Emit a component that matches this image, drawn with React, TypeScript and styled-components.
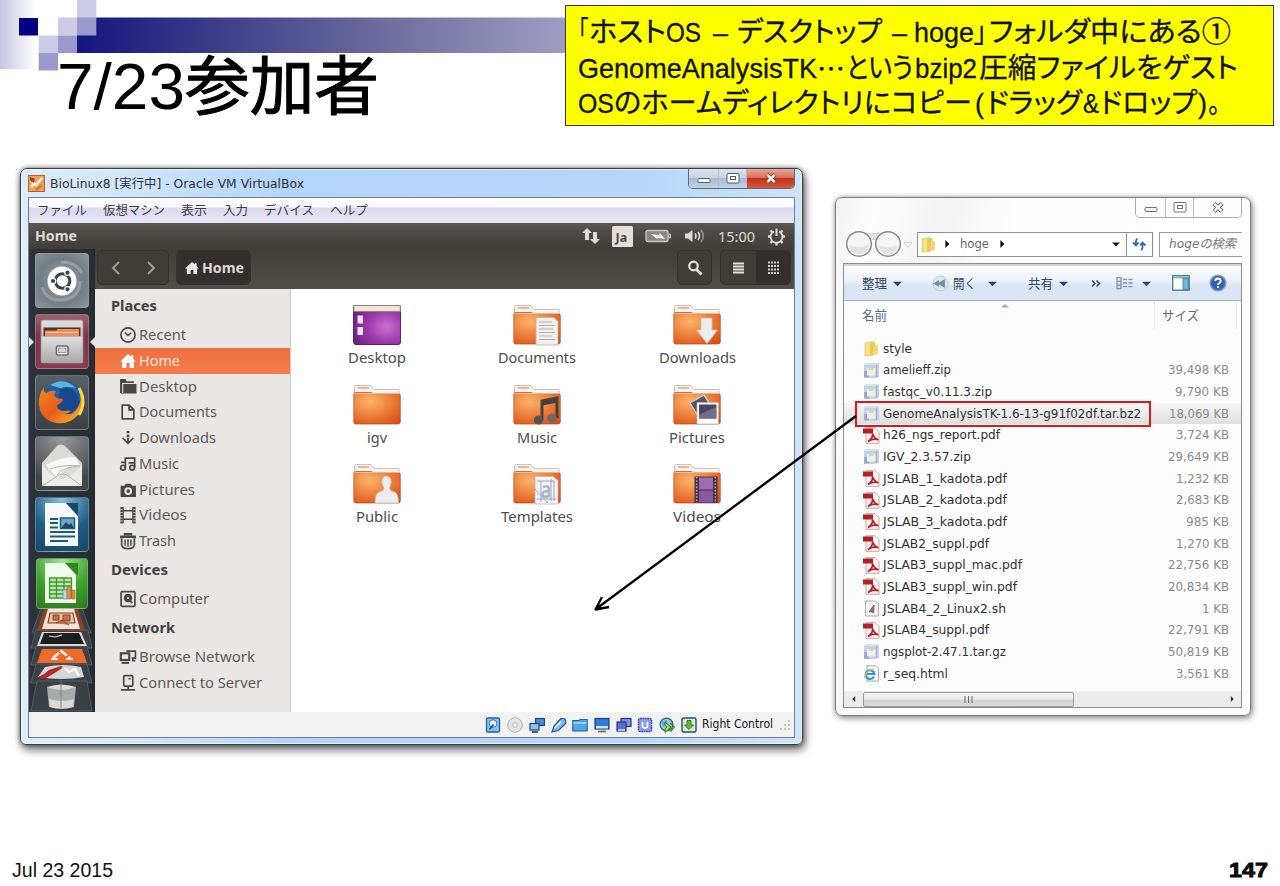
import React, { useLayoutEffect, useRef, useState } from "react";
import styled, { createGlobalStyle, css } from "styled-components";

const CJK = `"Noto Sans CJK JP", sans-serif`;
const UBUNTU = `"Noto Sans", "Open Sans", sans-serif`;
const WIN = `"DejaVu Sans", ${CJK}`;

const Global = createGlobalStyle`
  * { box-sizing: border-box; }
  body { margin: 0; background: #fff; overflow: hidden; }
`;

/* ---------- text set to a fixed measure ---------- */
const FitBox = styled.span<{ $w: number; $cjk?: boolean; $stroke?: number }>`
  display: inline-block;
  flex: none;
  width: ${(p) => p.$w}px;
  white-space: pre;
  text-align: left;
  ${(p) => p.$cjk && css`font-family: ${CJK};`}
  ${(p) => p.$stroke && css`-webkit-text-stroke: ${p.$stroke}px currentColor;`}
`;
const FitInner = styled.span`
  display: inline-block;
  transform-origin: 0 50%;
`;
function Fit({ w, cjk, stroke, children }: { w: number; cjk?: boolean; stroke?: number; children: string }) {
  const ref = useRef<HTMLSpanElement>(null);
  const [scale, setScale] = useState(1);
  useLayoutEffect(() => {
    if (ref.current && ref.current.offsetWidth) {
      const style = getComputedStyle(ref.current);
      setScale(w / parseFloat(style.width));
    }
  }, [w, children]);
  return (
    <FitBox $w={w} $cjk={cjk} $stroke={stroke}>
      <FitInner ref={ref} style={{ transform: `scaleX(${scale})` }}>
        {children}
      </FitInner>
    </FitBox>
  );
}

/* ---------- slide ---------- */
const Slide = styled.main`
  position: relative;
  display: flex;
  flex-direction: column;
  width: 1280px;
  height: 886px;
  background: #fff;
  overflow: hidden;
`;
const Header = styled.header`
  position: relative;
  display: flex;
  justify-content: space-between;
  align-items: flex-start;
  height: 168px;
  padding: 0 6px 0 57px;
`;
const Decor = styled.svg`
  position: absolute;
  left: 0;
  top: 0;
`;
const Title = styled.h1`
  position: relative;
  display: flex;
  margin: 50px 0 0;
  font: 400 64px/74px "Liberation Sans", ${CJK};
  color: #000;
`;
const Callout = styled.div`
  position: relative;
  width: 709px;
  height: 121px;
  margin-top: 5px;
  padding: 9px 0 0 12px;
  border: 1.5px solid #3a3a10;
  background: #ffff00;
  font: 400 28px/35.5px "Liberation Sans", ${CJK};
  font-feature-settings: "palt";
  -webkit-text-stroke: 0.3px #111;
  color: #111;
`;
const CalloutLine = styled.div`
  display: flex;
  height: 35.5px;
`;
const Gap = styled.span<{ $w: number }>`
  flex: none;
  width: ${(p) => p.$w}px;
`;
const Stage = styled.section`
  display: flex;
  align-items: flex-start;
  padding-left: 20px;
`;
const Footer = styled.footer`
  display: flex;
  justify-content: space-between;
  margin-top: auto;
  padding: 0 12px 4px;
  font: 400 19.5px/24px "Liberation Sans", sans-serif;
  color: #111;
`;
const PageNo = styled.b`
  font-weight: 700;
  font-size: 19.5px;
  -webkit-text-stroke: 0.8px #000;
`;
const Arrow = styled.svg`
  position: absolute;
  left: 585px;
  top: 405px;
`;

/* ---------- VirtualBox window ---------- */
const VmWindow = styled.article`
  display: flex;
  flex-direction: column;
  width: 783px;
  height: 577px;
  padding: 0 7px 6px;
  border: 1.5px solid #33404d;
  border-radius: 7px 7px 6px 6px;
  background: linear-gradient(90deg, #deecf9 0, #d3e7fb 90px, #b4d5fa 260px, #b6d7fa 620px, #cfe4f8 100%);
  box-shadow: 0 0 5px rgba(0, 0, 0, 0.55), 2px 5px 10px rgba(0, 0, 0, 0.55), inset 0 0 0 1px rgba(255, 255, 255, 0.65);
`;
const VmTitle = styled.div`
  display: flex;
  justify-content: space-between;
  height: 28px;
  flex: none;
  font: 400 12.5px/27px ${WIN};
  color: #2b3038;
`;
const VmName = styled.div`
  display: flex;
  align-items: center;
  gap: 5px;
`;
const Captions = styled.div<{ $pale?: boolean }>`
  display: flex;
  height: 20px;
  border: 1px solid ${(p) => (p.$pale ? "#a9a9a9" : "#5f6b7d")};
  border-top: 0;
  border-radius: 0 0 5px 5px;
  overflow: hidden;
`;
const Caption = styled.span<{ $w: number; $kind: "blue" | "red" | "pale" }>`
  display: flex;
  align-items: center;
  justify-content: center;
  width: ${(p) => p.$w}px;
  & + & {
    border-left: 1px solid ${(p) => (p.$kind === "pale" ? "#bdbdbd" : "#6a7687")};
  }
  background: ${(p) =>
    p.$kind === "red"
      ? "linear-gradient(#e9a898 0, #d9705a 45%, #bf3320 50%, #d8573c 100%)"
      : p.$kind === "blue"
        ? "linear-gradient(#dbe5f1 0, #c5d3e4 45%, #a9bcd3 50%, #bed2e8 100%)"
        : "#fdfdfd"};
`;
const Client = styled.div`
  display: flex;
  flex-direction: column;
  flex: 1;
  border: 1px solid #6d7f92;
  background: #f2f2f3;
  min-height: 0;
`;
const MenuBar = styled.nav`
  display: flex;
  flex: none;
  gap: 16px;
  height: 25px;
  padding-left: 8px;
  background: linear-gradient(#fff 0, #f5f6fb 35%, #d9dbee 42%, #e6e5f5 100%);
  font: 400 12.5px/23px ${CJK};
  color: #3c3c44;
`;
const Panel = styled.div`
  display: flex;
  align-items: center;
  flex: none;
  height: 26px;
  padding: 0 8px 0 6px;
  background: linear-gradient(#5b5753 0, #4c4944 45%, #413e3a 100%);
  font: 400 14.5px/26px ${UBUNTU};
  color: #dfdbd2;
`;
const PanelTitle = styled.b`
  margin-right: auto;
  font-weight: 700;
  font-size: 14px;
`;
const Indicators = styled.div`
  display: flex;
  align-items: center;
  gap: 12px;
`;
const Guest = styled.div`
  display: flex;
  flex: 1;
  min-height: 0;
`;
const Launcher = styled.aside`
  display: flex;
  flex-direction: column;
  flex: none;
  align-items: center;
  gap: 6px;
  width: 66px;
  padding-top: 4px;
  background: linear-gradient(90deg, #2c3339, #262d33);
  border-right: 1px solid #20262b;
`;
const Tile = styled.div<{ $bg: string; $short?: boolean }>`
  position: relative;
  display: flex;
  align-items: center;
  justify-content: center;
  flex: none;
  width: ${(p) => (p.$short ? 52 : 54)}px;
  height: ${(p) => (p.$short ? 51 : 55)}px;
  border: 1px solid rgba(160, 170, 178, 0.45);
  border-radius: 4px;
  background: ${(p) => p.$bg};
`;
const Pip = styled.span<{ $side: "left" | "right" }>`
  position: absolute;
  top: 22px;
  ${(p) => (p.$side === "left" ? css`left: -7px; border-left: 5px solid #e4e4e4;` : css`right: -7px; border-right: 5px solid #e4e4e4;`)}
  border-top: 5px solid transparent;
  border-bottom: 5px solid transparent;
`;
const Folded = styled.svg`
  display: block;
  flex: none;
  margin-top: -7px;
`;
const Files = styled.div`
  display: flex;
  flex-direction: column;
  flex: 1;
`;
const Toolbar = styled.div`
  display: flex;
  align-items: center;
  flex: none;
  height: 40px;
  padding: 0 1px 3px 2px;
  background: linear-gradient(#413e3a, #524f49);
  color: #dfdbd2;
`;
const ToolGroup = styled.div`
  display: flex;
  height: 35px;
  border: 1px solid #35322e;
  border-radius: 5px;
  background: #403d39;
  overflow: hidden;
`;
const ToolButton = styled.span<{ $w: number; $on?: boolean }>`
  display: flex;
  align-items: center;
  justify-content: center;
  gap: 2px;
  width: ${(p) => p.$w}px;
  background: ${(p) => (p.$on ? "#322f2c" : "transparent")};
  font: 700 14.5px/33px ${UBUNTU};
`;
const Browser = styled.div`
  display: flex;
  flex: 1;
  min-height: 0;
`;
const Sidebar = styled.aside`
  flex: none;
  width: 196px;
  padding-top: 1px;
  background: #e9e6e4;
  border-right: 1px solid #cdc9c6;
  color: #5e5a56;
`;
const SideHeading = styled.div`
  height: 32px;
  padding-left: 16px;
  font: 700 14px/32px ${UBUNTU};
  color: #45413e;
`;
const SideRow = styled.div<{ $on?: boolean }>`
  display: flex;
  align-items: center;
  gap: 2px;
  height: 25.8px;
  padding-left: 24px;
  font: 400 14px/26px ${UBUNTU};
  color: ${(p) => (p.$on ? "#fde6dc" : "#5e5a56")};
  background: ${(p) => (p.$on ? "linear-gradient(#ee6f3d, #f47c4c)" : "none")};
`;
const IconGrid = styled.div`
  display: grid;
  grid-template-columns: repeat(3, 160px);
  grid-auto-rows: 79.6px;
  flex: 1;
  padding: 15px 0 0 6px;
  background: #fff;
`;
const IconCell = styled.div`
  display: flex;
  flex-direction: column;
  align-items: center;
  font: 400 14px/20px ${UBUNTU};
  color: #4c4c4c;
  svg { display: block; margin-bottom: 2px; }
`;
const StatusBar = styled.div`
  display: flex;
  align-items: center;
  justify-content: flex-end;
  flex: none;
  gap: 5.7px;
  height: 25px;
  padding-right: 3px;
  background: #f1f1f1;
  font: 400 12px/25px "DejaVu Sans", sans-serif;
  color: #111;
`;

/* ---------- Explorer window ---------- */
const Explorer = styled.article`
  display: flex;
  flex-direction: column;
  width: 416px;
  height: 519px;
  margin: 29px 0 0 32px;
  padding: 0 8px 7px 7px;
  border: 1.5px solid #7d7d7d;
  border-radius: 7px;
  background: linear-gradient(105deg, #f1f1f1 0, #fdfdfd 40px, #f3f3f3 110px, #fefefe 180px, #fff 100%);
  box-shadow: 0 0 5px rgba(0, 0, 0, 0.35), 2px 3px 6px rgba(0, 0, 0, 0.3);
`;
const ExplorerTop = styled.div`
  display: flex;
  justify-content: flex-end;
  flex: none;
  height: 33px;
`;
const NavRow = styled.div`
  display: flex;
  align-items: center;
  flex: none;
  height: 26px;
  margin-bottom: 6px;
  color: #666;
  font: 400 12.5px/22px ${WIN};
`;
const Address = styled.div`
  display: flex;
  align-items: center;
  width: 236px;
  height: 25px;
  margin-left: 3px;
  border: 1px solid #8f8f8f;
  background: #fff;
`;
const Refresh = styled.span`
  display: flex;
  align-items: center;
  justify-content: center;
  width: 26px;
  height: 23px;
  border-left: 1px solid #8f8f8f;
`;
const Search = styled.div`
  flex: 1;
  height: 25px;
  margin-left: 6px;
  padding-left: 9px;
  border: 1px solid #9a9a9a;
  border-right: 0;
  background: #fff;
  font-style: italic;
  color: #777;
`;
const Body = styled.div`
  display: flex;
  flex-direction: column;
  flex: 1;
  min-height: 0;
  border: 1px solid #8b8b8b;
  background: #fdfdfd;
`;
const Commands = styled.div`
  display: flex;
  align-items: center;
  flex: none;
  height: 37px;
  padding-left: 18px;
  border-top: 2px solid #d3d7e0;
  border-bottom: 1.5px solid #a9b3c4;
  background: linear-gradient(#fbfdff 0, #edf3fb 40%, #d9e4f4 60%, #dbe6f5 100%);
  font: 400 13px/32px ${CJK};
  color: #36475f;
`;
const Columns = styled.div`
  position: relative;
  display: flex;
  flex: none;
  height: 36.5px;
  padding-left: 18px;
  font: 400 13px/28px ${CJK};
  color: #5f6a78;
`;
const SizeHead = styled.span`
  width: 83px;
  height: 28px;
  margin-left: auto;
  margin-right: 4px;
  padding-left: 7px;
  border-left: 1px solid #e6e6e6;
  border-right: 1px solid #ececec;
`;
const SortMark = styled.svg`
  position: absolute;
  left: 156px;
  top: 2px;
`;
const FileRow = styled.div<{ $on?: boolean }>`
  position: relative;
  display: flex;
  align-items: center;
  flex: none;
  gap: 3px;
  height: 21.7px;
  padding: 0 12px 0 19px;
  font: 400 12.5px/21.7px ${WIN};
  color: #303030;
  background: ${(p) => (p.$on ? "linear-gradient(#f6f6f6, #dedede)" : "none")};
  svg { flex: none; }
`;
const FileSize = styled.span`
  display: flex;
  margin-left: auto;
  color: #8a8a8a;
`;
const Highlight = styled.span`
  position: absolute;
  left: 11px;
  top: -2px;
  width: 296px;
  height: 26px;
  border: 2px solid #e8141c;
`;
const ScrollBar = styled.div`
  display: flex;
  align-items: center;
  justify-content: space-between;
  height: 16px;
  margin-top: auto;
  padding: 0 6px 0 7px;
  background: #ececec;
`;
const Track = styled.div`
  flex: 1;
  display: flex;
  margin: 0 6px;
`;
const Thumb = styled.div`
  display: flex;
  align-items: center;
  justify-content: center;
  width: 211px;
  height: 15px;
  border: 1px solid #9b9b9b;
  border-radius: 2px;
  background: linear-gradient(#f6f6f6 0, #e8e8e8 48%, #d2d2d2 55%, #dcdcdc 100%);
`;

/* ---------- small drawings ---------- */
const CapIcon = ({ kind, pale }: { kind: "min" | "max" | "close"; pale?: boolean }) => {
  const s = pale ? "#707070" : "#4f5a6a";
  return (
    <svg width="16" height="13" viewBox="0 0 16 13">
      {kind === "min" && <rect x="2" y="6.5" width="12" height="4" rx="1" fill="#fff" stroke={s} />}
      {kind === "max" && (
        <g fill="#fff" stroke={s}>
          <rect x="2" y="1.5" width="12" height="9.5" rx="1" />
          <rect x="5.500" y="4.500" width="5" height="3" />
        </g>
      )}
      {kind === "close" && (
        <g>
          <path d="M4 2.500l8 8M12 2.500l-8 8" stroke={pale ? "#666" : "#8a3b33"} strokeWidth="4.400" />
          <path d="M4.300 2.800l7.400 7.400M11.700 2.800l-7.400 7.400" stroke="#fff" strokeWidth="2.400" />
        </g>
      )}
    </svg>
  );
};

const House = ({ color = "currentColor", s = 18 }: { color?: string; s?: number }) => (
  <svg width={s} height={s} viewBox="0 0 17 17" fill={color}>
    <path d="M8.500 2L1 9h2v6h4v-4.500h3V15h4V9h2l-2.600-2.600V3h-2v1.500z" />
  </svg>
);

const sideIcons: Record<string, React.ReactNode> = {
  Recent: <><circle cx="8.500" cy="8.500" r="6.700" /><path d="M5.500 6l3 3 3-2.600" strokeWidth="1.400" /></>,
  Desktop: <><path d="M1 15V2h5.200l1 2H14v1.600H3V15z" fill="currentColor" stroke="none" /><path d="M4 6.600h12.500V15.500H1.500V15H4z" fill="currentColor" stroke="none" /></>,
  Documents: <path d="M3 2h6.500L14 6.300V15H3zM9.500 2v4.500H14" />,
  Downloads: <><path d="M3.500 8.500l5 5 5-5M8.500 13V8" /><path d="M8.500 2v2M8.500 5.500v2" strokeWidth="2.600" /></>,
  Music: <><circle cx="3.800" cy="12" r="2.200" /><circle cx="12.400" cy="12" r="2.200" /><path d="M6 12V7H2M6 8V3h8.800v9M9 7.500h5" /></>,
  Pictures: <path fillRule="evenodd" d="M1.500 4.500h3.500l1.500-2h4.500l1.500 2h3.500V15H1.500zM8.700 6a3.600 3.600 0 100 7.200 3.600 3.600 0 000-7.200zm0 1.900a1.700 1.700 0 110 3.400 1.700 1.700 0 010-3.400z" fill="currentColor" stroke="none" />,
  Videos: <><path d="M2.500 1v15.500M14.500 1v15.500" strokeWidth="2.400" strokeDasharray="2 .7" /><path d="M4 1v15M13 1v15" strokeWidth="1" /><path d="M4 4.500h9M4 12.500h9" strokeWidth="1.600" /></>,
  Trash: <><path d="M1 4.500h15M4.500 2h8" strokeWidth="2.200" /><path d="M2.500 6v6.500Q3 15.800 8.500 15.800T14.500 12.500V6" /><path d="M5.700 7v6M8.500 7v7M11.300 7v6" strokeWidth="1.400" /></>,
  Computer: <><rect x="2" y="1.500" width="13" height="14" rx="1" /><circle cx="8.500" cy="7.500" r="3.200" fill="currentColor" /><circle cx="8.500" cy="7.500" r="1" fill="#e9e6e4" stroke="none" /><path d="M9.500 8.500l3 4" /></>,
  "Browse Network": <><path d="M7 3h8.500v6.500H12M13 9v3h2.500" /><rect x="1.700" y="5" width="8" height="6.300" fill="#e9e6e4" strokeWidth="2" /><path d="M2.500 14h7" strokeWidth="2" /></>,
  "Connect to Server": <><rect x="4.500" y="1.500" width="8.500" height="10" rx="1" /><path d="M9 4.500h2M8.700 11.500V15M2 15h13" /></>,
};
const SideIcon = ({ name }: { name: string }) =>
  name === "Home" ? (
    <House color="#fff" />
  ) : (
    <svg width="18" height="18" viewBox="0 0 17 17" fill="none" stroke="currentColor" strokeWidth="1.600" color="#4a4642">
      {sideIcons[name]}
    </svg>
  );

const folderArt: Record<string, React.ReactNode> = {
  Documents: <><path d="M23 13.500h18l4 4V41H23z" fill="#f1efec" stroke="#b9b4ae" strokeWidth=".8" /><path d="M26 18h13M26 21.500h16M26 25h14M26 28.500h16M26 32h13M26 35.500h16" stroke="#b5b2ae" strokeWidth="1.200" /></>,
  Downloads: <path d="M28 14h11v12h5.500L34 39.500 23.500 26H28z" fill="#eeecea" stroke="#c3beba" strokeWidth=".8" />,
  Music: <><path d="M29 36V17l15-3v20" fill="none" stroke="#44423e" strokeWidth="3" /><path d="M29 19l15-3" stroke="#44423e" strokeWidth="5" /><circle cx="25.500" cy="36" r="4.600" fill="#56534f" /><circle cx="39" cy="34" r="4.600" fill="#6d6862" /></>,
  Pictures: <><path d="M17 19l14-8 9 14-13 10z" fill="#56536a" stroke="#d6d1cd" strokeWidth="1.400" /><path d="M24 18.500h21.500V40H24z" fill="#fff" stroke="#bbb6b2" strokeWidth=".7" /><rect x="26" y="20.500" width="17.500" height="14" fill="#4b4560" /><path d="M26 31l17-8v11.500H26z" fill="#746c8c" /></>,
  Public: <path d="M33.500 13a4.500 5.500 0 014 8.500l-1 4q0 2 5 3.500 4 1.500 4 11H22q0-9.500 4-11 5-1.500 5-3.500l-1.500-4a4.500 5.500 0 014-8.500z" fill="#ececea" stroke="#c0bcb8" strokeWidth=".8" />,
  Templates: <><path d="M22 13.500h18l5 4V41H22z" fill="#f3f3f4" stroke="#b9b9bf" strokeWidth=".8" /><path d="M24 18h17v20M28 18v21M38 16v22M24 36h19M22 26l13 14" fill="none" stroke="#8e9dbb" strokeWidth=".9" /><path d="M30 24q6-2 6 2v7q-6 2-6.500-1.500T36 28" fill="none" stroke="#a2b2d4" strokeWidth="2.400" /></>,
  Videos: <><rect x="21.500" y="13.500" width="23" height="26.500" fill="#3e3540" /><rect x="26" y="14.500" width="14" height="12" fill="#a06bb3" /><rect x="26" y="27.500" width="14" height="12" fill="#8c55a2" /><path d="M23.700 14v26M42.300 14v26" stroke="#b8a5bd" strokeWidth="1.600" strokeDasharray="1.600 1.600" /></>,
};
const Folder = ({ name }: { name: string }) =>
  name === "Desktop" ? (
    <svg width="48" height="42" viewBox="0 0 48 42">
      <rect x=".5" y="1.500" width="47" height="39" rx="2.500" fill="url(#desk)" stroke="#5a2468" />
      <rect x=".8" y="1.500" width="46.500" height="6" fill="#ece6d2" stroke="#8b8272" strokeWidth=".9" />
      <rect x="4.500" y="11.500" width="5.500" height="8" fill="#f2def6" />
      <rect x="4.500" y="23" width="5.500" height="8" fill="#f2def6" />
    </svg>
  ) : (
    <svg width="48" height="42" viewBox="0 0 48 42">
      <path d="M1.500 12V3q0-1.500 1.500-1.500h15l3 4h25V14H1.500z" fill="#faf4f0" stroke="#d0b8aa" strokeWidth=".9" />
      <path d="M5 4h11" stroke="#e0a88c" strokeWidth="1.600" />
      <path d="M.8 10.500q0-2 2-2h15l3 1h24.500q2 0 2 2V38q0 2-2 2H2.800q-2 0-2-2z" fill="url(#fold)" stroke="#b9481c" strokeWidth=".7" />
      <path d="M1.500 9.500h45" stroke="#fbd2b0" strokeWidth="1" opacity=".7" />
      {folderArt[name]}
    </svg>
  );

const FileIcon = ({ kind }: { kind: string }) => (
  <svg width="17" height="17" viewBox="0 0 17 17">
    {kind === "dir" && (
      <g>
        <path d="M2 3l7-1.500V15l-7 1z" fill="#f5e08a" stroke="#d9bd55" strokeWidth=".6" />
        <path d="M7 2.500l3-1 2.500 1V14L9 16l-2-1z" fill="#e8ca5c" />
        <path d="M11 6l4-1.500V14l-5 1z" fill="#efd77a" />
      </g>
    )}
    {kind === "zip" && (
      <g>
        <path d="M1 2.500h11l4-1V15l-4 1H1z" fill="#c3d1e6" />
        <path d="M1 2.500L3 1h13l-3.500 1.500z" fill="#d5e0ef" />
        <rect x="1" y="9" width="5" height="6.500" fill="#93abd3" />
        <rect x="4" y="6" width="8.500" height="7.500" rx="1" fill="#f3efe4" />
        <path d="M6 6h4.500v2H6z" fill="#e0d3a6" />
        <path d="M13.500 3v12" stroke="#9db2d3" strokeWidth="1.200" />
      </g>
    )}
    {kind === "pdf" && (
      <g>
        <path d="M3 .7h9l4 4V16.300H3z" fill="#fbf3f2" stroke="#c79a98" strokeWidth=".9" />
        <path d="M0 1.500h10v5H0z" fill="#b11f29" />
        <path d="M5 14.500q5-3 4.500-8 1.500 5 6 6.300Q10 11 5 14.500z" fill="none" stroke="#b5212b" strokeWidth="1.700" />
      </g>
    )}
    {kind === "sh" && (
      <g>
        <path d="M2.500 1h10l3 2.500V16h-13z" fill="#f4f2f1" stroke="#a8a4a2" strokeWidth=".9" />
        <path d="M6 12l5-7-.5 8" fill="#8d7075" stroke="#6b5f63" strokeWidth="1" />
      </g>
    )}
    {kind === "html" && (
      <g>
        <path d="M4 .8h8.500l3 3V16H4z" fill="#fbfbfb" stroke="#a0a0a0" strokeWidth=".9" />
        <path d="M11 11.500A4.400 4.400 0 1111.400 9H4" fill="none" stroke="#2f97d3" strokeWidth="2.200" />
        <path d="M1.500 13.500Q1 8 10.500 3" fill="none" stroke="#e4c845" strokeWidth="1.300" />
      </g>
    )}
  </svg>
);

const statusArt: React.ReactNode[] = [
  <><rect x="1.500" y="1" width="13" height="14" rx="1.500" fill="#8cc4ee" stroke="#205f9e" strokeWidth="1.300" /><circle cx="8" cy="6.500" r="3.800" fill="#e9f6ff" stroke="#2e78b8" /><path d="M4.500 12.500l4-5" stroke="#184f8c" strokeWidth="1.700" /></>,
  <><circle cx="8" cy="8" r="7.300" fill="#e3e3e3" stroke="#b3b3b3" /><circle cx="8" cy="8" r="2.200" fill="#fff" stroke="#b5b5b5" /></>,
  <><rect x="6.500" y="1.500" width="9" height="7" fill="#4f8bda" stroke="#1f4374" strokeWidth="1.200" /><rect x="1" y="6.500" width="9" height="6.500" fill="#8fc0f2" stroke="#1f4374" strokeWidth="1.200" /><path d="M3 15h6" stroke="#1f4374" strokeWidth="1.600" /></>,
  <><path d="M1 15l2-6 7-7.500 4 .5 1 4-7.500 7.500z" fill="#7db9ea" stroke="#265a92" strokeWidth="1.200" /><path d="M4 11l6-6.500" stroke="#dff0fc" strokeWidth="1.600" /></>,
  <><path d="M.8 14V3.500h6l1.500-1h6.900V14z" fill="#4fa8e8" stroke="#225f9d" strokeWidth="1.100" /><path d="M1.500 6h13" stroke="#b9e0fa" strokeWidth="1.400" /></>,
  <><rect x="1" y="1.500" width="14" height="10.500" fill="#2b7de0" stroke="#2b3f5c" strokeWidth="1.200" /><rect x="2" y="9" width="12" height="2.500" fill="#cfe3f6" /><path d="M4 14.500h8" stroke="#666" strokeWidth="1.600" /></>,
  <><rect x="5" y="1.500" width="10" height="8" fill="#7892e0" stroke="#25367e" strokeWidth="1.200" /><rect x="1" y="5" width="9" height="9" fill="#5970cd" stroke="#25367e" strokeWidth="1.200" /><path d="M2 13h7" stroke="#cdd8fa" strokeWidth="1.600" /></>,
  <><rect x="1.500" y="1.500" width="13" height="13" rx="1.500" fill="#8fa0e6" stroke="#39459c" strokeWidth="1.400" strokeDasharray="1.800 .6" /><path d="M5.500 5v4q0 2 2.500 2t2.500-2V5" fill="none" stroke="#fff" strokeWidth="1.500" /></>,
  <><circle cx="7.500" cy="7.500" r="6.400" fill="#9ac7e6" stroke="#2b5d8d" strokeWidth="1.200" /><path d="M3 5l4-2 2 2-5 5z" fill="#5ca4d6" /><path d="M6 5l6 5-6 5.500v-3.500L8 10 6 8.500z" fill="#a5dd4c" stroke="#3c7c17" /><path d="M11 6l4.500 4-4 4.500" fill="none" stroke="#3c7c17" strokeWidth="1.200" /></>,
  <><rect x="1" y="1" width="14" height="14" rx="1.500" fill="#d9e9e0" stroke="#2d4d73" strokeWidth="1.400" /><path d="M6 3.500h4V8h2.500L8 12.500 3.500 8H6z" fill="#67bd24" stroke="#2f7312" strokeWidth=".9" /></>,
];

const Defs = () => (
  <svg width="0" height="0" display="block" aria-hidden="true">
    <defs>
      <radialGradient id="fold" cx=".35" cy=".28" r=".9">
        <stop offset="0" stopColor="#f9b56c" />
        <stop offset=".45" stopColor="#ee853f" />
        <stop offset="1" stopColor="#d94c15" />
      </radialGradient>
      <radialGradient id="desk" cx=".7" cy=".55" r=".75">
        <stop offset="0" stopColor="#c873cf" />
        <stop offset=".5" stopColor="#a13cae" />
        <stop offset="1" stopColor="#6c2181" />
      </radialGradient>
      <linearGradient id="fox" x1="0" y1="0" x2="1" y2="1">
        <stop offset="0" stopColor="#f08a1d" />
        <stop offset=".5" stopColor="#e8591c" />
        <stop offset="1" stopColor="#f5c032" />
      </linearGradient>
      <linearGradient id="steel" x1="0" y1="0" x2="0" y2="1">
        <stop offset="0" stopColor="#dedede" />
        <stop offset="1" stopColor="#a9a9a9" />
      </linearGradient>
      <linearGradient id="bar" x1="77" x2="566" y1="0" y2="0" gradientUnits="userSpaceOnUse">
        <stop offset="0" stopColor="#15157f" />
        <stop offset=".3" stopColor="#3f3f8a" />
        <stop offset=".68" stopColor="#7474a2" />
        <stop offset="1" stopColor="#9f9dc3" />
      </linearGradient>
      <linearGradient id="fade" x1="0" x2="1" y1="0" y2="0">
        <stop offset="0" stopColor="#c5c5e3" />
        <stop offset="1" stopColor="#fff" />
      </linearGradient>
    </defs>
  </svg>
);

const SlideDecor = () => (
  <Decor width="570" height="72" viewBox="0 0 570 72">
    <rect width="36" height="69" fill="url(#fade)" />
    <rect x="77" y="17.500" width="493" height="35.500" fill="url(#bar)" />
    <rect x="19" y="18" width="19" height="17.500" fill="#000080" />
    <g fill="#cbcbe6">
      <rect x="77" width="19.300" height="18" />
      <rect x="58" y="17.500" width="19" height="18" />
      <rect x="38.700" y="35.500" width="19.300" height="18" />
    </g>
    <g fill="#9999cc">
      <rect x="77" y="17.500" width="19.300" height="18" />
      <rect x="58" y="35.500" width="19" height="17.500" />
      <rect x="38.700" y="53" width="19.300" height="17.500" />
    </g>
  </Decor>
);

/* ---------- launcher drawings ---------- */
const UbuntuLogo = () => (
  <svg width="52" height="52" viewBox="0 0 52 52">
    <path d="M6 32q4 14 20 13 18-2 18-19M46 18Q40 7 25 7" fill="none" stroke="#b9c1c6" strokeWidth="3" opacity=".45" />
    <circle cx="26" cy="26" r="14.500" fill="#fff" />
    <circle cx="26.500" cy="26" r="7.300" fill="none" stroke="#3b4247" strokeWidth="3" />
    <g fill="#3b4247" stroke="#fff" strokeWidth="1.200">
      <circle cx="17" cy="26" r="2.700" />
      <circle cx="31.500" cy="17.700" r="2.700" />
      <circle cx="31.500" cy="34.300" r="2.700" />
    </g>
  </svg>
);
const Cabinet = () => (
  <svg width="48" height="50" viewBox="0 0 48 50">
    <rect x="3" y="3" width="42" height="43" rx="2" fill="url(#steel)" stroke="#8c8c8c" strokeWidth=".8" />
    <rect x="5.500" y="10.500" width="37" height="9" fill="#55302a" />
    <path d="M7 19v-5.500h11l1.500-1.500H41v7z" fill="#ec8f5c" />
    <path d="M8 15.500h32" stroke="#fbcba5" strokeWidth="1" />
    <rect x="3.500" y="19.500" width="41" height="26.500" rx="1" fill="url(#steel)" />
    <rect x="18.500" y="29" width="11.500" height="9" rx="1.500" fill="#fff" stroke="#6b6b6b" strokeWidth="1.600" />
    <rect x="20.500" y="31" width="7.500" height="4.500" fill="#d6d6d6" stroke="#777" strokeWidth=".7" />
  </svg>
);
const Firefox = () => (
  <svg width="52" height="52" viewBox="0 0 52 52">
    <circle cx="27" cy="24" r="20" fill="#1d5fa8" />
    <path d="M14 8q14-9 26 3-8-2-11 2-8-3-15-5z" fill="#58b4e4" />
    <path d="M24 12q10-6 17 6t-6 18q-10 4-14-4z" fill="#174a8a" />
    <path d="M42 12q9 14 0 26-9 10-22 8Q5 43 3 28 2 18 8 10q-1 5 2 6 5-3 10-2-4 5 1 7l6 1q-1 4-6 6 0 6 8 6 3-1 6 0-2 2-6 3 8 2 13-7 5-8 0-18z" fill="url(#fox)" />
    <path d="M43 11q8 14 0 27" fill="none" stroke="#f6da45" strokeWidth="3" />
  </svg>
);
const Mail = () => (
  <svg width="48" height="50" viewBox="0 0 48 50">
    <path d="M4 24L19 7q4-3 8 0l17 17v23H4z" fill="#dadad8" />
    <path d="M8 26q14-8 30-8l4 9q-18 1-22 13z" fill="#f8f8f6" />
    <path d="M4 25q8 14 20 15 13-3 20-15v22H4z" fill="#ebebe9" />
    <path d="M4 47l17-11q4-2 8 0l15 11M12 30q15-5 30-3-18 1-23 9" fill="none" stroke="#b4b4b1" strokeWidth="1" />
  </svg>
);
const Writer = () => (
  <svg width="42" height="46" viewBox="0 0 42 46">
    <path d="M4 1h21l12 13v30H4z" fill="#f5f9fb" />
    <path d="M25 1l12 13V1z" fill="#164a6c" />
    <path d="M9 17h8M9 21h8M9 25.500h8M9 30h25M9 34.500h25M9 39h18" stroke="#1f5879" strokeWidth="2" />
    <rect x="19.500" y="16" width="14" height="10.500" fill="#69a8c9" stroke="#1f5879" strokeWidth="1.500" />
    <path d="M20 26l5-6 3 3 2-2 3 5z" fill="#194a68" />
  </svg>
);
const Calc = () => (
  <svg width="42" height="46" viewBox="0 0 42 46">
    <path d="M4 2h20l11 12v28H4z" fill="#f2faee" />
    <path d="M24 2l13 13V2z" fill="#2e8a1f" />
    <path d="M8.500 17h22v20h-22zM8.500 21h22M8.500 25h22M8.500 29h22M8.500 33h22M15.500 17v20M23 17v20" fill="#bde5ac" stroke="#3a9a2b" strokeWidth="1.300" />
    <path d="M22 38v-9h4v9z" fill="#b9d7ee" stroke="#6f9bc4" strokeWidth=".9" />
    <path d="M26 38V26h3.500v12zM31 38v-9h3v9z" fill="#e68b3c" stroke="#b5713c" strokeWidth=".7" />
  </svg>
);
const Stack = () => (
  <Folded width="65" height="104" viewBox="0 0 65 104">
    <g fill="#3a4147" stroke="#5d656b" strokeWidth=".8">
      <path d="M12 0h41l9 25H3z" />
      <path d="M7 22h52l4 18H2z" />
      <path d="M7 38h51l5 19H2z" />
      <path d="M7 56h51l5 19H2z" />
      <path d="M8 73h50l5 30H2z" />
    </g>
    <path d="M15 1h34l7 22H8z" fill="#8a4524" />
    <path d="M19 1h26l6 20H13z" fill="#f3e3da" />
    <path d="M21 5h23l2 10H19z" fill="#edc0a0" stroke="#7c442b" strokeWidth="1.200" />
    <path d="M24 7h6v5h-6zM34 7h7v6h-7zM27 15l6-3 7 5" fill="#cc6a44" stroke="#7c442b" strokeWidth=".9" />
    <path d="M13 24h39l6 14H8z" fill="#d8d8d8" />
    <path d="M15 25h35l5 11H11z" fill="#1c1d1f" />
    <path d="M20 28l6 1 7-2" stroke="#ddd" strokeWidth="1.200" fill="none" />
    <path d="M13 41h40l5 14H8z" fill="#ee6a2b" />
    <path d="M24 50l8-7 9 7" fill="none" stroke="#fff0e6" strokeWidth="2.600" strokeDasharray="8 2" />
    <path d="M22 51h7M37 51h7" stroke="#fff0e6" strokeWidth="2" />
    <path d="M16 59q18-4 36 0l3 10q-23 4-46 0z" fill="#d6d6d6" />
    <path d="M9 69q6-2 11-7l12-4q3 0 0 3l-13 8q-6 3-10 0z" fill="#b5282d" />
    <path d="M36 60l4 4 6-3 4 7" stroke="#fff" strokeWidth="2" fill="none" />
    <path d="M18 79h29l-2 20q-12 4-25 0z" fill="#a9abab" />
    <path d="M18 79q14-5 29 0-14 6-29 0zM20 91q12 4 25 0l-1 8q-12 3-23 0z" fill="#d9dada" />
    <path d="M32 72v28" stroke="#777" strokeWidth=".8" />
  </Folded>
);

/* ---------- data ---------- */
const menus: [string, number][] = [["ファイル", 50], ["仮想マシン", 62], ["表示", 26], ["入力", 25], ["デバイス", 50], ["ヘルプ", 38]];
const places: [string, number][] = [["Recent", 47], ["Home", 41], ["Desktop", 58], ["Documents", 78], ["Downloads", 77], ["Music", 40], ["Pictures", 56], ["Videos", 48], ["Trash", 37]];
const folders: [string, number][] = [["Desktop", 58], ["Documents", 78], ["Downloads", 77], ["igv", 20], ["Music", 40], ["Pictures", 56], ["Public", 42], ["Templates", 72], ["Videos", 48]];
const files: [string, string, number, string, number][] = [
  ["dir", "style", 29, "", 0],
  ["zip", "amelieff.zip", 68, "39,498 KB", 61],
  ["zip", "fastqc_v0.11.3.zip", 109, "9,790 KB", 54],
  ["zip", "GenomeAnalysisTK-1.6-13-g91f02df.tar.bz2", 258, "18,069 KB", 60],
  ["pdf", "h26_ngs_report.pdf", 117, "3,724 KB", 53],
  ["zip", "IGV_2.3.57.zip", 88, "29,649 KB", 61],
  ["pdf", "JSLAB_1_kadota.pdf", 124, "1,232 KB", 53],
  ["pdf", "JSLAB_2_kadota.pdf", 124, "2,683 KB", 53],
  ["pdf", "JSLAB_3_kadota.pdf", 124, "985 KB", 43],
  ["pdf", "JSLAB2_suppl.pdf", 106, "1,270 KB", 53],
  ["pdf", "JSLAB3_suppl_mac.pdf", 139, "22,756 KB", 61],
  ["pdf", "JSLAB3_suppl_win.pdf", 134, "20,834 KB", 61],
  ["sh", "JSLAB4_2_Linux2.sh", 123, "1 KB", 27],
  ["pdf", "JSLAB4_suppl.pdf", 106, "22,791 KB", 61],
  ["zip", "ngsplot-2.47.1.tar.gz", 123, "50,819 KB", 61],
  ["html", "r_seq.html", 65, "3,561 KB", 53],
];

/* numbers are gaps, pairs are text runs with their measure */
const calloutLines: (number | [string, number])[][] = [
  [["「", 10], 1, ["ホスト", 77], ["OS", 35], 12, ["–", 15], 9, ["デスクトップ", 145], 10, ["–", 15], 7, ["hoge", 60], ["」", 13], 2, ["フォルダ中にある①", 242]],
  [["GenomeAnalysisTK", 239], ["…", 28], 1, ["という", 67], 2, ["bzip2", 62], 2, ["圧縮ファイルをゲスト", 259]],
  [["OS", 36], ["のホームディレクトリにコピー", 358], 3, ["(", 9], 2, ["ドラッグ", 96], 1, ["&", 16], 1, ["ドロップ", 97], 1, [")", 9], 1, ["。", 12]],
];

const Tri = ({ dir, w = 9, c = "#36475f" }: { dir: "down" | "right" | "left"; w?: number; c?: string }) => (
  <svg width={w} height={w} viewBox="0 0 10 10" fill={c}>
    <path d={dir === "down" ? "M0 3h10L5 8z" : dir === "right" ? "M3 0v10l5-5z" : "M7 0v10L2 5z"} />
  </svg>
);

const VirtualBox = () => (
  <VmWindow>
    <VmTitle>
      <VmName>
        <svg width="17" height="17" viewBox="0 0 17 17">
          <rect x=".5" y=".5" width="16" height="16" fill="#eda45a" stroke="#a2683a" />
          <path d="M2 5l6 5 6-7M3 12l4-4" stroke="#fff3df" strokeWidth="2.500" fill="none" />
          <path d="M2 2l5 2-1 4-4-2z" fill="#b5372c" />
          <path d="M8 15l6-5" stroke="#d9772b" strokeWidth="2.500" />
        </svg>
        <Fit w={254}>BioLinux8 [実行中] - Oracle VM VirtualBox</Fit>
      </VmName>
      <Captions>
        <Caption $w={29} $kind="blue"><CapIcon kind="min" /></Caption>
        <Caption $w={28} $kind="blue"><CapIcon kind="max" /></Caption>
        <Caption $w={48} $kind="red"><CapIcon kind="close" /></Caption>
      </Captions>
    </VmTitle>
    <Client>
      <MenuBar>{menus.map(([t, w]) => <Fit key={t} w={w}>{t}</Fit>)}</MenuBar>
      <Panel>
        <PanelTitle><Fit w={42}>Home</Fit></PanelTitle>
        <Indicators>
          <svg width="19" height="18" viewBox="0 0 19 18" fill="#dfdbd2">
            <path d="M6 1l5 5H8v7H4V6H1zM14 17l-5-5h3V5h4v7h3z" />
          </svg>
          <svg width="21" height="21" viewBox="0 0 21 21">
            <rect width="21" height="21" rx="1.500" fill="#e3dfd6" />
            <text x="3.500" y="15.500" fontSize="12.500" fontWeight="700" fill="#4a4742" fontFamily="Noto Sans, sans-serif">Ja</text>
          </svg>
          <svg width="27" height="14" viewBox="0 0 27 14">
            <rect x="1" y="1.500" width="22" height="11" rx="2" fill="#8a8781" stroke="#c9c5bc" strokeWidth="1.400" />
            <path d="M24 5v4h1.500V5z" stroke="#c9c5bc" fill="none" />
            <path d="M6 5l8 1 1-2 5 6-7-1-1 1z" fill="#f2efe8" />
          </svg>
          <svg width="22" height="16" viewBox="0 0 22 16" fill="none" stroke="#dfdbd2" strokeWidth="1.600">
            <path d="M1 5.500h3L8.500 2v12L4 10.500H1z" fill="#dfdbd2" stroke="none" />
            <path d="M11 5.500q2 2.500 0 5M14 4q3 4 0 8" />
            <path d="M17 2q4.500 6 0 12" opacity=".5" />
          </svg>
          <Fit w={37}>15:00</Fit>
          <svg width="19" height="19" viewBox="0 0 19 19" fill="none" stroke="#dfdbd2">
            <path d="M7 4.300a6 6 0 105 0" strokeWidth="1.900" />
            <path d="M9.500 1.500v7.500" strokeWidth="2" />
            <path d="M3.500 3.500l1.800 1.800M15.500 3.500l-1.800 1.800M1 9.500h2.500M18 9.500h-2.500M3.500 16l1.800-2M15.500 16l-1.800-2M9.500 18.500V16" strokeWidth="2.400" />
          </svg>
        </Indicators>
      </Panel>
      <Guest>
        <Launcher>
          <Tile $bg="radial-gradient(circle, #9aa4ab, #727d85 60%, #8a949b)"><UbuntuLogo /></Tile>
          <Tile $bg="linear-gradient(#a06070, #83324a 40%, #8b3c4e)"><Pip $side="left" /><Cabinet /><Pip $side="right" /></Tile>
          <Tile $bg="linear-gradient(#586067, #3a4147)"><Firefox /></Tile>
          <Tile $bg="radial-gradient(circle at 50% 0, #9a9c9d, #3f4549 80%)"><Mail /></Tile>
          <Tile $bg="radial-gradient(circle at 50% 0, #8fbfd8, #1f5f87 55%, #1a4766)"><Writer /></Tile>
          <Tile $short $bg="radial-gradient(circle at 50% 0, #a9e39a, #3fa32c 55%, #2c7a20)"><Calc /></Tile>
          <Stack />
        </Launcher>
        <Files>
          <Toolbar>
            <ToolGroup>
              <ToolButton $w={35}><svg width="10" height="14" viewBox="0 0 10 14"><path d="M8 1L2 7l6 6" fill="none" stroke="#a5a19a" strokeWidth="1.900" /></svg></ToolButton>
              <ToolButton $w={35}><svg width="10" height="14" viewBox="0 0 10 14"><path d="M2 1l6 6-6 6" fill="none" stroke="#a5a19a" strokeWidth="1.900" /></svg></ToolButton>
            </ToolGroup>
            <Gap $w={7} />
            <ToolGroup>
              <ToolButton $w={73} $on><House color="#efece6" s={16} /><Fit w={42}>Home</Fit></ToolButton>
            </ToolGroup>
            <Gap $w={426} />
            <ToolGroup>
              <ToolButton $w={33}>
                <svg width="16" height="16" viewBox="0 0 16 16" fill="none" stroke="#e6e2da"><circle cx="6.500" cy="6" r="4.300" strokeWidth="2.200" /><path d="M9.500 9.500l5 5" strokeWidth="2.800" /></svg>
              </ToolButton>
            </ToolGroup>
            <Gap $w={8} />
            <ToolGroup>
              <ToolButton $w={35}><svg width="12" height="12" viewBox="0 0 12 12"><path d="M0 1.500h11M0 4.500h11M0 7.500h11M0 10.500h11" stroke="#e6e2da" strokeWidth="1.800" /></svg></ToolButton>
              <ToolButton $w={34} $on><svg width="13" height="13" viewBox="0 0 13 13"><path d="M1 1.500h11M1 5h11M1 8.500h11M1 12h11" stroke="#d6d2ca" strokeWidth="2" strokeDasharray="2 1" /></svg></ToolButton>
            </ToolGroup>
          </Toolbar>
          <Browser>
            <Sidebar>
              <SideHeading><Fit w={46}>Places</Fit></SideHeading>
              {places.map(([t, w]) => (
                <SideRow key={t} $on={t === "Home"}><SideIcon name={t} /><Fit w={w}>{t}</Fit></SideRow>
              ))}
              <SideHeading><Fit w={57}>Devices</Fit></SideHeading>
              <SideRow><SideIcon name="Computer" /><Fit w={70}>Computer</Fit></SideRow>
              <SideHeading><Fit w={64}>Network</Fit></SideHeading>
              <SideRow><SideIcon name="Browse Network" /><Fit w={116}>Browse Network</Fit></SideRow>
              <SideRow><SideIcon name="Connect to Server" /><Fit w={123}>Connect to Server</Fit></SideRow>
            </Sidebar>
            <IconGrid>
              {folders.map(([t, w]) => (
                <IconCell key={t}><Folder name={t} /><Fit w={w}>{t}</Fit></IconCell>
              ))}
            </IconGrid>
          </Browser>
        </Files>
      </Guest>
      <StatusBar>
        {statusArt.map((a, i) => <svg key={i} width="16" height="16" viewBox="0 0 16 16">{a}</svg>)}
        <Fit w={71}>Right Control</Fit>
        <svg width="12" height="14" viewBox="0 0 12 14" fill="#c4c4c4">
          <path d="M9 2h2v2H9zM9 6h2v2H9zM9 10h2v2H9zM5 6h2v2H5zM5 10h2v2H5zM1 10h2v2H1z" />
        </svg>
      </StatusBar>
    </Client>
  </VmWindow>
);

const FileExplorer = () => (
  <Explorer>
    <ExplorerTop>
      <Captions $pale>
        <Caption $w={29} $kind="pale"><CapIcon pale kind="min" /></Caption>
        <Caption $w={28} $kind="pale"><CapIcon pale kind="max" /></Caption>
        <Caption $w={48} $kind="pale"><CapIcon pale kind="close" /></Caption>
      </Captions>
    </ExplorerTop>
    <NavRow>
      <svg width="71" height="28" viewBox="0 0 71 28">
        <path d="M16 2.500q14 3 29 0v4q-14 6-29 0z" fill="#e8e8e8" stroke="#bbb" strokeWidth=".8" />
        <circle cx="16" cy="14" r="12.300" fill="#f4f4f4" stroke="#8a8a8a" strokeWidth="1.500" />
        <circle cx="45" cy="14" r="12.300" fill="#f4f4f4" stroke="#8a8a8a" strokeWidth="1.500" />
        <path d="M6.500 15q9 4 19 0-1 9-9.500 9t-9.500-9zM35.500 15q9 4 19 0-1 9-9.500 9t-9.500-9z" fill="#e2e2e2" />
        <path d="M61 12.500h8l-4 5z" fill="#fff" stroke="#c6c6c6" strokeWidth=".8" />
      </svg>
      <Address>
        <Gap $w={2} /><FileIcon kind="dir" /><Gap $w={6} /><Tri dir="right" w={8} c="#111" /><Gap $w={9} />
        <Fit w={29}>hoge</Fit><Gap $w={9} /><Tri dir="right" w={8} c="#111" />
        <Gap $w={106} /><Tri dir="down" w={8} c="#111" /><Gap $w={6} />
        <Refresh>
          <svg width="15" height="14" viewBox="0 0 15 14" fill="none" stroke="#2f69b4" strokeWidth="1.800">
            <path d="M5.500 1.500Q3.500 2 4 8M1 5.500l3 3 2.500-3" /><path d="M9 13q2-.5 1.500-6.500M8 8.500l2.500-3 3 3" />
          </svg>
        </Refresh>
      </Address>
      <Search><Fit w={67}>hogeの検索</Fit></Search>
    </NavRow>
    <Body>
      <Commands>
        <Fit w={25}>整理</Fit><Gap $w={6} /><Tri dir="down" /><Gap $w={30} />
        <svg width="17" height="17" viewBox="0 0 17 17"><circle cx="8.500" cy="8.500" r="7.500" fill="#dde8f0" stroke="#b9c9d4" /><path d="M1 8.500l6-3.500v2.500L13 4v9L7 9.500V12z" fill="#7193a8" /></svg>
        <Gap $w={4} /><Fit w={23}>開く</Fit><Gap $w={12} /><Tri dir="down" /><Gap $w={31} />
        <Fit w={25}>共有</Fit><Gap $w={6} /><Tri dir="down" /><Gap $w={23} />
        <svg width="10" height="9" viewBox="0 0 10 9"><path d="M1 1.500l3 3-3 3M5.500 1.500l3 3-3 3" fill="none" stroke="#36475f" strokeWidth="1.500" /></svg>
        <Gap $w={15} />
        <svg width="17" height="13" viewBox="0 0 17 13" fill="none" stroke="#8090ac" strokeWidth="1.300">
          <path d="M1 .7h4v11H1zM1 4.300h4M1 8h4M7 2.500h4M7 6h4M7 9.700h4M12.500 2.500h4M12.500 6h4M12.500 9.700h4" />
        </svg>
        <Gap $w={9} /><Tri dir="down" /><Gap $w={21} />
        <svg width="18" height="16" viewBox="0 0 18 16"><rect x=".7" y=".7" width="16.500" height="14.500" fill="#fff" stroke="#44798c" strokeWidth="1.300" /><path d="M1 2.500h16" stroke="#79aab8" strokeWidth="1.600" /><rect x="11" y="3.500" width="5.500" height="11" fill="#6fb7cf" stroke="#44798c" strokeWidth=".8" /></svg>
        <Gap $w={19} />
        <svg width="18" height="18" viewBox="0 0 18 18"><circle cx="9" cy="9" r="7.800" fill="#3560b8" stroke="#8798b8" strokeWidth="1.600" /><path d="M6.300 7q0-2.500 2.700-2.500T11.700 7q0 1.500-1.500 2.200-1.200.6-1.200 1.800M9 12.200v1.800" fill="none" stroke="#fff" strokeWidth="1.800" /></svg>
      </Commands>
      <Columns>
        <Fit w={25}>名前</Fit>
        <SortMark width="10" height="5" viewBox="0 0 10 5"><path d="M1 4.500l4-3.500 4 3.500z" fill="#8fb0c2" /></SortMark>
        <SizeHead><Fit w={37}>サイズ</Fit></SizeHead>
      </Columns>
      {files.map(([k, n, w, s, sw]) => (
        <FileRow key={n} $on={n.startsWith("Genome")}>
          <FileIcon kind={k} />
          <Fit w={w}>{n}</Fit>
          {s && <FileSize><Fit w={sw}>{s}</Fit></FileSize>}
          {n.startsWith("Genome") && <Highlight />}
        </FileRow>
      ))}
      <ScrollBar>
        <Tri dir="left" w={6} c="#333" />
        <Track>
          <Thumb><svg width="9" height="7" viewBox="0 0 9 7"><path d="M1 0v7M4.500 0v7M8 0v7" stroke="#666" /></svg></Thumb>
        </Track>
        <Tri dir="right" w={6} c="#333" />
      </ScrollBar>
    </Body>
  </Explorer>
);

export default function App() {
  return (
    <Slide>
      <Global />
      <Header>
        <SlideDecor />
        <Title><Fit w={128}>7/23</Fit><Fit w={194} stroke={1}>参加者</Fit></Title>
        <Callout>
          {calloutLines.map((line, i) => (
            <CalloutLine key={i}>
              {line.map((p, j) =>
                typeof p === "number" ? <Gap key={j} $w={p} /> : <Fit key={j} w={p[1]} cjk={p[0] === "…"}>{p[0]}</Fit>,
              )}
            </CalloutLine>
          ))}
        </Callout>
      </Header>
      <Stage>
        <VirtualBox />
        <FileExplorer />
      </Stage>
      <Footer>
        <Fit w={101}>Jul 23 2015</Fit>
        <PageNo><Fit w={39}>147</Fit></PageNo>
      </Footer>
      <Arrow width="275" height="212" viewBox="0 0 275 212">
        <path d="M271 11L11 204M17 192l-6.500 12.500L24 202" fill="none" stroke="#000" strokeWidth="2.300" strokeLinejoin="round" />
      </Arrow>
      <Defs />
    </Slide>
  );
}
